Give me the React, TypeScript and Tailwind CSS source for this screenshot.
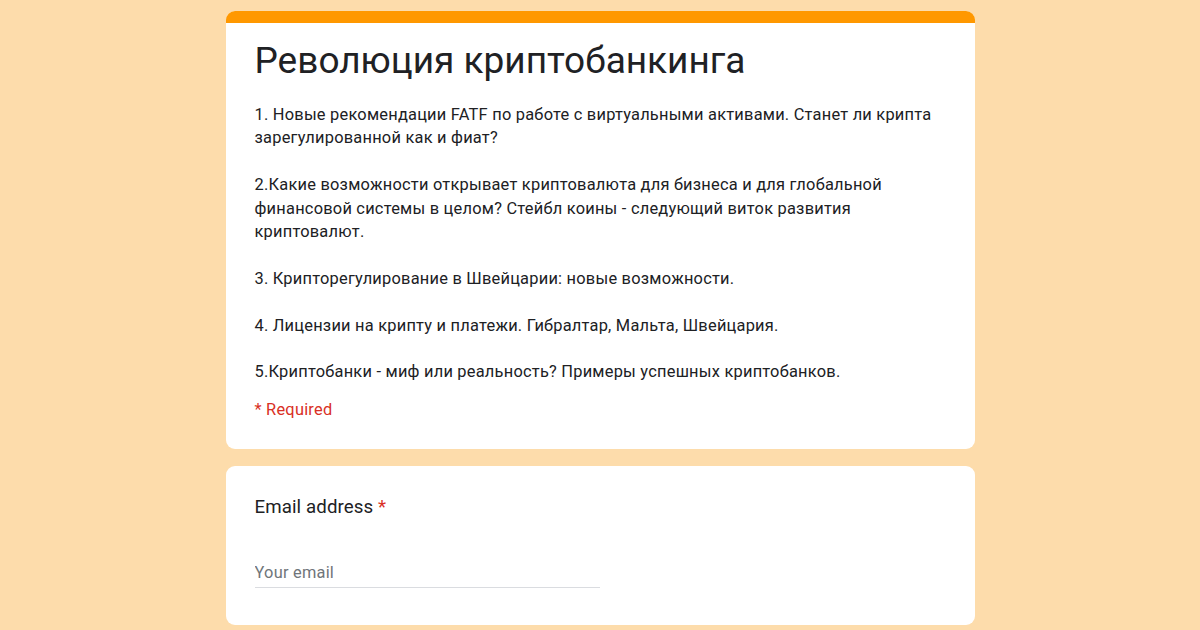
export default function App() {
  const description = `1. Новые рекомендации FATF по работе с виртуальными активами. Станет ли крипта зарегулированной как и фиат?

2.Какие возможности открывает криптовалюта для бизнеса и для глобальной финансовой системы в целом? Стейбл коины - следующий виток развития криптовалют.

3. Крипторегулирование в Швейцарии: новые возможности.

4. Лицензии на крипту и платежи. Гибралтар, Мальта, Швейцария.

5.Криптобанки - миф или реальность? Примеры успешных криптобанков.`;

  return (
    <div className="min-h-screen bg-[#fddcab] flex flex-col items-center pt-[11px] gap-[17px] font-['Roboto',sans-serif] text-[#202124]">
      {/* Шапка формы */}
      <div className="w-[749px] bg-white rounded-[9px] overflow-hidden">
        <div className="h-[12px] bg-[#ff9800]"></div>
        <div className="px-[29px] pt-[14px] pb-[28px]">
          <h1 className="text-[37px] leading-[48px] tracking-[0px]">Революция криптобанкинга</h1>
          <p className="mt-[18px] text-[16.4px] leading-[23.4px] tracking-[0.23px] whitespace-pre-line">
            {description}
          </p>
          <div className="mt-[14px] text-[16.4px] leading-[23.4px] tracking-[0.23px] text-[#d93025]">* Required</div>
        </div>
      </div>

      {/* Вопрос */}
      <div className="w-[749px] bg-white rounded-[9px] px-[29px] pt-[27px] pb-[37px]">
        <div className="text-[18.7px] leading-[28px] tracking-[0.1px]">
          Email address <span className="text-[#d93025]">*</span>
        </div>
        <div className="mt-[40px] w-[345px] border-b border-[#dadce0] pb-[2px]">
          <input
            placeholder="Your email"
            className="w-full bg-transparent outline-none text-[16.4px] leading-[23.4px] tracking-[0.23px] placeholder:text-[#70757a]"
          />
        </div>
      </div>
    </div>
  );
}
